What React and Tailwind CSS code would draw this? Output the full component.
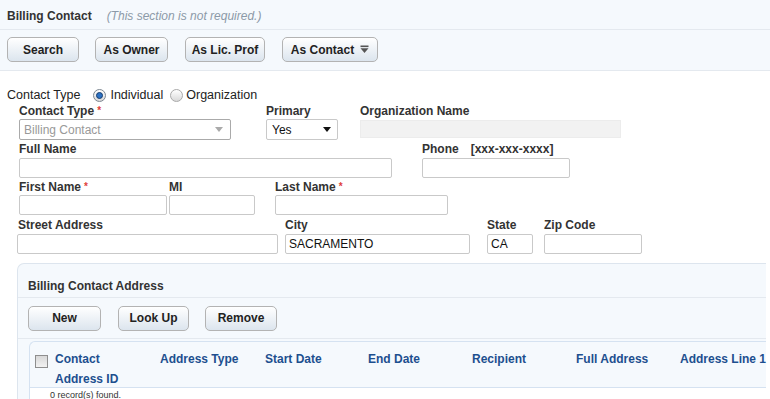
const font = { fontFamily: '"Liberation Sans", Arial, sans-serif' }

function Btn({ children, w, arrow }) {
  return (
    <button
      className={`h-[25px] ${w} flex items-center justify-center gap-[6px] rounded-[5px] border border-[#b3b3b3] bg-gradient-to-b from-white to-[#dce5ee] text-[12px] font-bold text-[#222]`}
    >
      {children}
      {arrow && (
        <svg width="9" height="9" viewBox="0 0 9 9">
          <rect x="0.5" y="0.5" width="8" height="1.6" fill="#555" />
          <path d="M0.5 3.2 H8.5 L4.5 8 Z" fill="#555" />
        </svg>
      )}
    </button>
  )
}

function Label({ children, req, className = '' }) {
  return (
    <div className={`h-[14px] leading-[14px] text-[12px] font-bold text-[#333] whitespace-nowrap ${className}`}>
      {children}
      {req && <span className="text-[#e0413b] text-[10px] ml-[3px] align-top">*</span>}
    </div>
  )
}

function Input({ value, className = '' }) {
  return (
    <div className={`h-[20px] border border-[#c9c9c9] rounded-[2px] bg-white px-[3px] text-[12px] leading-[18px] text-[#111] ${className}`}>
      {value}
    </div>
  )
}

function Radio({ checked }) {
  return (
    <span className={`w-[13px] h-[13px] rounded-full border ${checked ? 'border-[#7d8791]' : 'border-[#a9a9a9]'} bg-gradient-to-b from-white to-[#d9d9d9] flex items-center justify-center`}>
      {checked && <span className="w-[7px] h-[7px] rounded-full bg-[#2c72c4] border border-[#173d6e]" />}
    </span>
  )
}

const cols = [
  ['Address Type', 'w-[105px]'],
  ['Start Date', 'w-[103px]'],
  ['End Date', 'w-[104px]'],
  ['Recipient', 'w-[104px]'],
  ['Full Address', 'w-[104px]'],
  ['Address Line 1', 'w-[90px]'],
]

export default function App() {
  return (
    <div className="w-[770px] h-[399px] overflow-hidden bg-white text-[#333]" style={font}>
      {/* section header */}
      <div className="h-[30px] bg-[#f5f9fd] border-b border-[#e4e9ef] flex items-center pl-[7px] pt-[2px]">
        <span className="text-[12px] font-bold text-[#333]">Billing Contact</span>
        <span className="ml-[15px] text-[12px] italic text-[#8c9aa8]">(This section is not required.)</span>
      </div>
      <div className="h-[41px] bg-[#f5f9fd] border-b border-[#e4e9ef] flex items-center pl-[7px] gap-[16px] pb-[1px]">
        <Btn w="w-[72px]">Search</Btn>
        <Btn w="w-[73px]">As Owner</Btn>
        <Btn w="w-[80px] ml-[1px]">As Lic. Prof</Btn>
        <Btn w="w-[96px] ml-[1px]" arrow>As Contact</Btn>
      </div>

      {/* form */}
      <div className="pt-[16px]">
        <div className="flex items-center h-[16px] pl-[7px] text-[12.5px]">
          <span className="text-[#222]">Contact Type</span>
          <span className="ml-[13px]"><Radio checked /></span>
          <span className="ml-[4px] text-[#222]">Individual</span>
          <span className="ml-[7px]"><Radio /></span>
          <span className="ml-[3px] text-[#222]">Organization</span>
        </div>

        <div className="flex mt-[1px] pl-[19px]">
          <div className="w-[212px]">
            <Label req>Contact Type</Label>
            <div className="mt-[1px] h-[21px] border border-[#aaa] rounded-[2px] bg-white flex items-center justify-between pl-[4px] pr-[7px] text-[12px] text-[#999]">
              Billing Contact
              <svg width="8" height="5" viewBox="0 0 8 5"><path d="M0 0 H8 L4 5 Z" fill="#aaa" /></svg>
            </div>
          </div>
          <div className="w-[72px] ml-[35px]">
            <Label>Primary</Label>
            <div className="mt-[1px] h-[21px] border border-[#c9c9c9] rounded-[2px] bg-white flex items-center justify-between pl-[5px] pr-[6px] text-[12px] text-[#111]">
              Yes
              <svg width="8" height="5" viewBox="0 0 8 5"><path d="M0 0 H8 L4 5 Z" fill="#111" /></svg>
            </div>
          </div>
          <div className="w-[261px] ml-[22px]">
            <Label>Organization Name</Label>
            <div className="mt-[2px] h-[18px] bg-[#f2f2f2] border border-[#ececec]" />
          </div>
        </div>

        <div className="flex mt-[2px] pl-[19px]">
          <div className="w-[373px]">
            <Label>Full Name</Label>
            <Input className="mt-[2px]" />
          </div>
          <div className="w-[148px] ml-[30px]">
            <Label>
              Phone<span className="ml-[12px]">[xxx-xxx-xxxx]</span>
            </Label>
            <Input className="mt-[2px]" />
          </div>
        </div>

        <div className="flex mt-[2px] pl-[19px]">
          <div className="w-[148px]">
            <Label req>First Name</Label>
            <Input className="mt-[1px]" />
          </div>
          <div className="w-[86px] ml-[2px]">
            <Label>MI</Label>
            <Input className="mt-[1px]" />
          </div>
          <div className="w-[173px] ml-[20px]">
            <Label req>Last Name</Label>
            <Input className="mt-[1px]" />
          </div>
        </div>

        <div className="flex mt-[3px] pl-[17px]">
          <div className="w-[261px]">
            <Label className="pl-[1px]">Street Address</Label>
            <Input className="mt-[2px]" />
          </div>
          <div className="w-[185px] ml-[7px]">
            <Label>City</Label>
            <Input className="mt-[2px]" value="SACRAMENTO" />
          </div>
          <div className="w-[46px] ml-[17px]">
            <Label>State</Label>
            <Input className="mt-[2px]" value="CA" />
          </div>
          <div className="w-[98px] ml-[11px]">
            <Label>Zip Code</Label>
            <Input className="mt-[2px]" />
          </div>
        </div>
      </div>

      {/* address panel */}
      <div className="mt-[9px] ml-[17px] w-[749px] bg-[#f5f9fd] border-l border-t border-[#dde5ee] rounded-tl-[7px]">
        <div className="h-[34px] border-b border-[#e4e9ef] pl-[10px] pt-[14px] leading-[14px]">
          <span className="text-[12px] font-bold text-[#333]">Billing Contact Address</span>
        </div>
        <div className="h-[41px] border-b border-[#e4e9ef] flex items-center pl-[10px] gap-[17px]">
          <Btn w="w-[73px]">New</Btn>
          <Btn w="w-[71px]">Look Up</Btn>
          <Btn w="w-[72px] -ml-[1px]">Remove</Btn>
        </div>
        <div className="ml-[11px] mt-[2px] border-l border-t border-[#d5e2f1] rounded-tl-[6px]">
          <div className="h-[46px] border-b border-[#d5e2f1] flex pt-[7px] text-[12px] font-bold text-[#1d4f8f] leading-[20px]">
            <div className="w-[25px] shrink-0 pl-[5px] pt-[6px]">
              <span className="block w-[13px] h-[13px] border border-[#8e8e8e] bg-gradient-to-b from-[#d8d8d8] to-[#f2f2f2]" />
            </div>
            <div className="w-[105px] shrink-0">Contact<br />Address ID</div>
            {cols.map(([t, w]) => (
              <div key={t} className={`${w} shrink-0 whitespace-nowrap`}>{t}</div>
            ))}
          </div>
          <div className="bg-white h-[20px] pl-[20px] text-[9px] text-[#333] leading-[14px]">
            0 record(s) found.
          </div>
        </div>
      </div>
    </div>
  )
}
